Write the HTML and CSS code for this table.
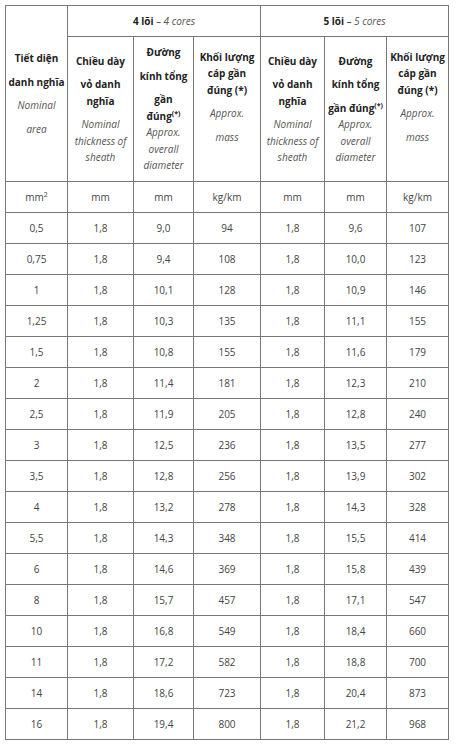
FILE: index.html
```html
<!DOCTYPE html>
<html lang="vi">
<head>
<meta charset="utf-8">
<title>Bảng thông số cáp</title>
<link rel="stylesheet" href="styles.css">
</head>
<body>
<div class="wrap">
<table class="spec">
  <colgroup>
    <col class="w1"><col class="w2"><col class="w3"><col class="w4"><col class="w5"><col class="w6"><col class="w7">
  </colgroup>
  <thead>
    <tr class="r-top">
      <th rowspan="2" class="hd">
        <div class="g b">Tiết diện</div>
        <div class="g b">danh nghĩa</div>
        <div class="g i">Nominal</div>
        <div class="g i">area</div>
      </th>
      <th colspan="3" class="grp"><b>4 lõi</b> <i>– 4 cores</i></th>
      <th colspan="3" class="grp"><b>5 lõi</b> <i>– 5 cores</i></th>
    </tr>
    <tr class="r-head">
      <th class="hd">
        <div class="g b">Chiều dày</div>
        <div class="g b">vỏ danh<br>nghĩa</div>
        <div class="g i">Nominal<br>thickness of<br>sheath</div>
      </th>
      <th class="hd">
        <div class="g b">Đường</div>
        <div class="g b">kính tổng</div>
        <div class="g"><b>gần<br>đúng<sup>(*)</sup></b><br><i>Approx.<br>overall<br>diameter</i></div>
      </th>
      <th class="hd tail">
        <div class="g b">Khối lượng<br>cáp gần<br>đúng (*)</div>
        <div class="g i">Approx.</div>
        <div class="g i">mass</div>
      </th>
      <th class="hd">
        <div class="g b">Chiều dày</div>
        <div class="g b">vỏ danh<br>nghĩa</div>
        <div class="g i">Nominal<br>thickness of<br>sheath</div>
      </th>
      <th class="hd">
        <div class="g b">Đường</div>
        <div class="g b">kính tổng</div>
        <div class="g"><b>gần đúng<sup>(*)</sup></b><br><i>Approx.<br>overall<br>diameter</i></div>
      </th>
      <th class="hd tail">
        <div class="g b">Khối lượng<br>cáp gần<br>đúng (*)</div>
        <div class="g i">Approx.</div>
        <div class="g i">mass</div>
      </th>
    </tr>
  </thead>
  <tbody>
    <tr><td>mm<sup class="sq">2</sup></td><td>mm</td><td>mm</td><td>kg/km</td><td>mm</td><td>mm</td><td>kg/km</td></tr>
    <tr><td>0,5</td><td>1,8</td><td>9,0</td><td>94</td><td>1,8</td><td>9,6</td><td>107</td></tr>
    <tr><td>0,75</td><td>1,8</td><td>9,4</td><td>108</td><td>1,8</td><td>10,0</td><td>123</td></tr>
    <tr><td>1</td><td>1,8</td><td>10,1</td><td>128</td><td>1,8</td><td>10,9</td><td>146</td></tr>
    <tr><td>1,25</td><td>1,8</td><td>10,3</td><td>135</td><td>1,8</td><td>11,1</td><td>155</td></tr>
    <tr><td>1,5</td><td>1,8</td><td>10,8</td><td>155</td><td>1,8</td><td>11,6</td><td>179</td></tr>
    <tr><td>2</td><td>1,8</td><td>11,4</td><td>181</td><td>1,8</td><td>12,3</td><td>210</td></tr>
    <tr><td>2,5</td><td>1,8</td><td>11,9</td><td>205</td><td>1,8</td><td>12,8</td><td>240</td></tr>
    <tr><td>3</td><td>1,8</td><td>12,5</td><td>236</td><td>1,8</td><td>13,5</td><td>277</td></tr>
    <tr><td>3,5</td><td>1,8</td><td>12,8</td><td>256</td><td>1,8</td><td>13,9</td><td>302</td></tr>
    <tr><td>4</td><td>1,8</td><td>13,2</td><td>278</td><td>1,8</td><td>14,3</td><td>328</td></tr>
    <tr><td>5,5</td><td>1,8</td><td>14,3</td><td>348</td><td>1,8</td><td>15,5</td><td>414</td></tr>
    <tr><td>6</td><td>1,8</td><td>14,6</td><td>369</td><td>1,8</td><td>15,8</td><td>439</td></tr>
    <tr><td>8</td><td>1,8</td><td>15,7</td><td>457</td><td>1,8</td><td>17,1</td><td>547</td></tr>
    <tr><td>10</td><td>1,8</td><td>16,8</td><td>549</td><td>1,8</td><td>18,4</td><td>660</td></tr>
    <tr><td>11</td><td>1,8</td><td>17,2</td><td>582</td><td>1,8</td><td>18,8</td><td>700</td></tr>
    <tr><td>14</td><td>1,8</td><td>18,6</td><td>723</td><td>1,8</td><td>20,4</td><td>873</td></tr>
    <tr><td>16</td><td>1,8</td><td>19,4</td><td>800</td><td>1,8</td><td>21,2</td><td>968</td></tr>
  </tbody>
</table>
</div>
</body>
</html>
```

FILE: styles.css
```css
html, body {
  margin: 0;
  padding: 0;
  background: #ffffff;
}

.wrap {
  padding: 5px 0 0 5px;
}

.spec {
  border-collapse: collapse;
  table-layout: fixed;
  width: 444px;
  font-family: "Open Sans", "Noto Sans", sans-serif;
  font-size: 10px;
  color: #444444;
}

.w1 { width: 62px; }
.w2 { width: 66px; }
.w3 { width: 60px; }
.w4 { width: 67px; }
.w5 { width: 64px; }
.w6 { width: 62px; }
.w7 { width: 62px; }

.spec th,
.spec td {
  border: 1px solid #777777;
  padding: 0;
  text-align: center;
  vertical-align: middle;
  font-weight: normal;
}

.r-top { height: 31px; }
.r-head { height: 145px; }
.spec tbody tr { height: 31px; }

.spec td {
  line-height: 16px;
  color: #444444;
}

.grp b {
  font-weight: 700;
  color: #222222;
}

.grp i {
  color: #555555;
}

.hd {
  line-height: 16.5px;
}

.hd.tail {
  padding-bottom: 24px;
}

.g + .g {
  margin-top: 7px;
}

.b,
.hd b {
  font-weight: 700;
  color: #222222;
}

.i,
.hd i {
  font-style: italic;
  color: #555555;
}

.hd sup {
  font-size: 7px;
  line-height: 0;
  vertical-align: 4px;
}

.sq {
  font-size: 7px;
  line-height: 0;
  vertical-align: 4px;
}
```
